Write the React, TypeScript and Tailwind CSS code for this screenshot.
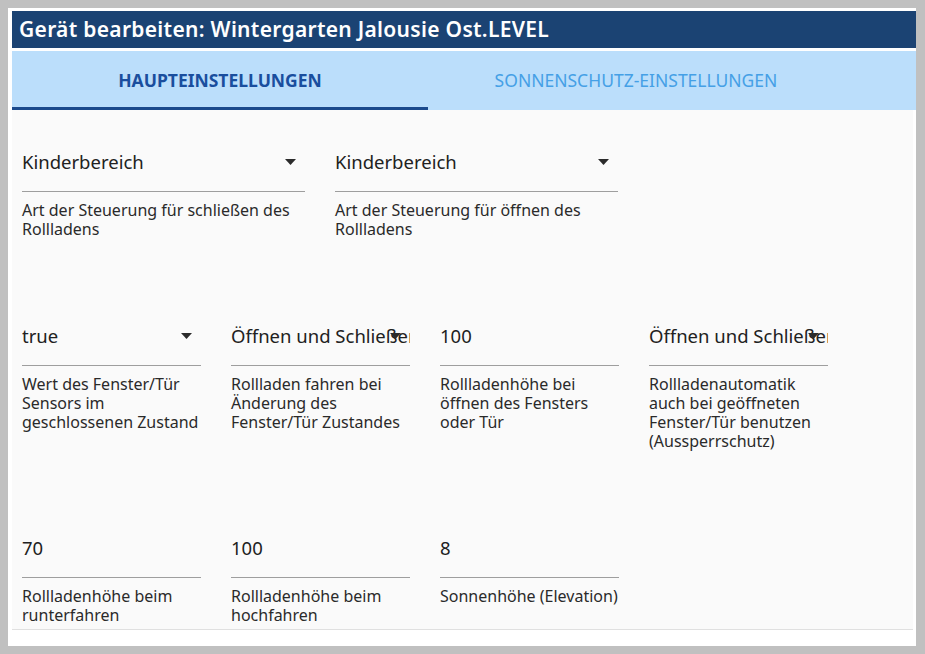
import { useState } from 'react';

type Field = {
  value: string;
  helper: string;
  select?: boolean;
};

const rowOne: Field[] = [
  { value: 'Kinderbereich', helper: 'Art der Steuerung für schließen des Rollladens', select: true },
  { value: 'Kinderbereich', helper: 'Art der Steuerung für öffnen des Rollladens', select: true },
];

const rowTwo: Field[] = [
  { value: 'true', helper: 'Wert des Fenster/Tür Sensors im geschlossenen Zustand', select: true },
  { value: 'Öffnen und Schließen', helper: 'Rollladen fahren bei Änderung des Fenster/Tür Zustandes', select: true },
  { value: '100', helper: 'Rollladenhöhe bei öffnen des Fensters oder Tür' },
  { value: 'Öffnen und Schließen', helper: 'Rollladenautomatik auch bei geöffneten Fenster/Tür benutzen (Aussperrschutz)', select: true },
];

const rowThree: Field[] = [
  { value: '70', helper: 'Rollladenhöhe beim runterfahren' },
  { value: '100', helper: 'Rollladenhöhe beim hochfahren' },
  { value: '8', helper: 'Sonnenhöhe (Elevation)' },
];

export default function App() {
  const [tab, setTab] = useState(0);

  return (
    <div className="w-[925px] h-[654px] bg-[#c0c0c0] pt-[8px] pl-[8px] pr-[9px] pb-[8px] font-['Noto_Sans',sans-serif]">
      <div className="h-full bg-white pt-[3px] pl-[4px] flex flex-col">
        {/* Title bar */}
        <div className="h-[37px] bg-[#1b4373] flex items-center px-[7px] shrink-0">
          <h1 className="text-white text-[21px] font-semibold tracking-[0.3px] leading-none">
            Gerät bearbeiten: Wintergarten Jalousie Ost.LEVEL
          </h1>
        </div>

        {/* Tabs */}
        <div className="mt-[3px] h-[59px] bg-[#bbdefb] flex shrink-0">
          <TabButton active={tab === 0} onClick={() => setTab(0)} label="Haupteinstellungen" />
          <TabButton active={tab === 1} onClick={() => setTab(1)} label="Sonnenschutz-Einstellungen" />
        </div>

        {/* Scrollable content */}
        <div className="h-[520px] bg-[#fafafa] border-b border-[#e0e0e0] mr-[3px] overflow-hidden shrink-0">
          <div className="pl-[10px] pt-[37px] flex flex-col gap-[82px]">
            <div className="flex gap-[30px]">
              {rowOne.map((f, i) => (
                <FormField key={i} field={f} width="w-[283px]" />
              ))}
            </div>
            <div className="flex gap-[30px]">
              {rowTwo.map((f, i) => (
                <FormField key={i} field={f} width="w-[179px]" />
              ))}
            </div>
            <div className="flex gap-[30px]">
              {rowThree.map((f, i) => (
                <FormField key={i} field={f} width="w-[179px]" />
              ))}
            </div>
          </div>
        </div>
      </div>
    </div>
  );
}

function TabButton({ active, label, onClick }: any) {
  return (
    <button
      onClick={onClick}
      className={`w-[416px] h-full flex items-center justify-center uppercase text-[17.5px] border-b-[3px] ${
        active
          ? 'font-bold text-[#1a4e9e] border-[#1b4a8c]'
          : 'font-normal text-[#45a0e6] border-transparent'
      }`}
    >
      <span className="pt-[3px]">{label}</span>
    </button>
  );
}

function FormField({ field, width }: { field: Field; width: string }) {
  return (
    <div className={`${width} shrink-0`}>
      <div className="relative border-b border-[#9e9e9e] pb-[14px]">
        <div className="h-[30px] flex items-center overflow-hidden whitespace-nowrap text-[18.5px] text-[#212121]">
          {field.value}
        </div>
        {field.select && (
          <svg
            className="absolute right-[9px] top-[12px] w-[11px] h-[6px] text-[#2b2b2b]"
            viewBox="0 0 11 6"
            fill="currentColor"
          >
            <path d="M0 0h11L5.5 6z" />
          </svg>
        )}
      </div>
      <p className="mt-[9px] text-[16px] leading-[19px] text-[#2a2a2a]">{field.helper}</p>
    </div>
  );
}
